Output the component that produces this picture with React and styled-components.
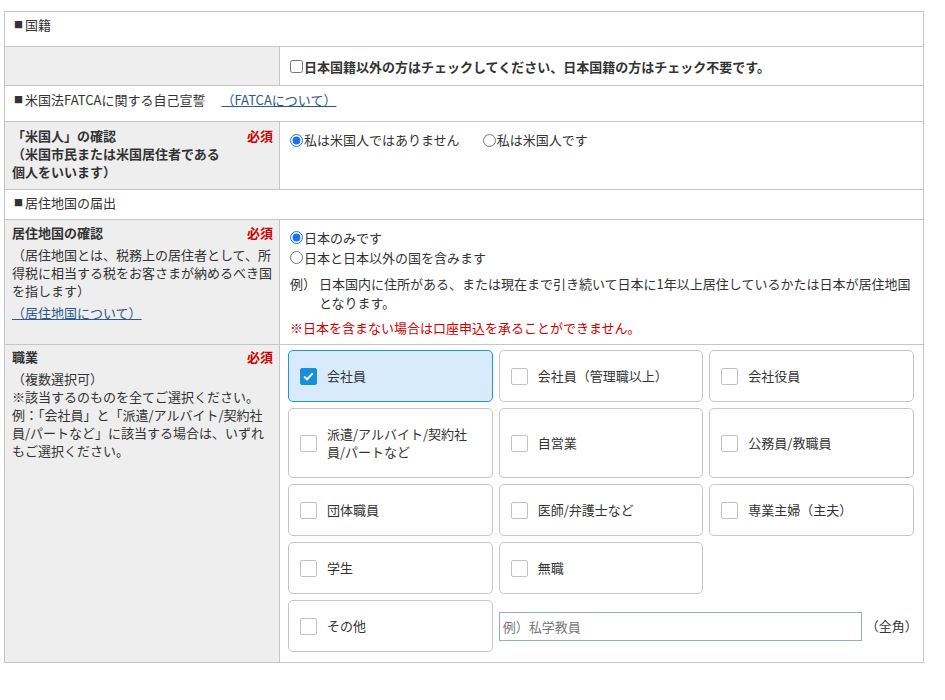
import styled, { createGlobalStyle } from "styled-components";

const GlobalStyle = createGlobalStyle`
  * { box-sizing: border-box; }
  body {
    margin: 0;
    background: #fff;
    color: #333;
    font-family: "Noto Sans CJK JP", "Noto Sans", sans-serif;
    font-size: 13px;
  }
`;

const Page = styled.div`
  padding: 11px 0 30px 4px;
`;

const Table = styled.div`
  width: 920px;
  border: 1px solid #c6c6c6;
  border-bottom: none;
`;

const SectionRow = styled.div`
  height: ${p => p.$h}px;
  padding: ${p => p.$pt}px 9px 0;
  border-bottom: 1px solid #c6c6c6;
  line-height: 18px;
  display: flex;
  align-items: flex-start;
`;

const Square = styled.span`
  font-size: 9px;
  margin-right: 2px;
  line-height: 18px;
`;

const Row = styled.div`
  display: grid;
  grid-template-columns: 275px 1fr;
  border-bottom: 1px solid #c6c6c6;
  min-height: ${p => p.$h || 0}px;
`;

const HeadCell = styled.div`
  background: #eee;
  border-right: 1px solid #c6c6c6;
  padding: ${p => p.$pt ?? 5}px 6px 8px 7px;
  line-height: 18px;
`;

const LabelLine = styled.div`
  display: flex;
  justify-content: space-between;
  align-items: flex-start;
  font-weight: bold;
`;

const Required = styled.span`
  color: #c00;
  font-weight: bold;
  flex-shrink: 0;
  margin-left: 8px;
`;

const Note = styled.div`
  margin-top: 4px;
`;

const Link = styled.a`
  color: #2b5a8a;
  text-decoration: underline;
  margin-left: ${p => p.$ml || 0}px;
`;

const BodyCell = styled.div`
  padding: ${p => p.$pad};
  line-height: ${p => p.$lh || 19}px;
  display: ${p => (p.$center ? "flex" : "block")};
  align-items: center;
`;

const CheckLabel = styled.label`
  display: inline-flex;
  align-items: center;
  font-weight: ${p => (p.$bold ? "bold" : "normal")};
  margin-right: ${p => p.$mr || 0}px;
`;

const NativeBox = styled.input`
  width: 13px;
  height: 13px;
  margin: 0 1px 0 0;
  accent-color: #1a73e8;
`;

const Example = styled.div`
  display: flex;
  margin-top: 6px;
`;

const ExampleMark = styled.span`
  width: 29px;
  flex-shrink: 0;
`;

const Warning = styled.div`
  color: #d40000;
  margin-top: 6px;
`;

const CardGrid = styled.div`
  display: grid;
  grid-template-columns: repeat(3, 1fr);
  gap: 6px;
`;

const Card = styled.label`
  grid-column: ${p => (p.$newRow ? "1" : "auto")};
  display: flex;
  align-items: center;
  min-height: 52px;
  padding: 16px 11px;
  border: 1px solid ${p => (p.$checked ? "#2196d8" : "#c6c6c6")};
  background: ${p => (p.$checked ? "#d8ebfc" : "#fff")};
  border-radius: 5px;
  line-height: 18px;
  cursor: pointer;
`;

const Box = styled.span`
  width: 17px;
  height: 17px;
  flex-shrink: 0;
  border: 1px solid ${p => (p.$checked ? "#1a8fd8" : "#c2c2c2")};
  background: ${p => (p.$checked ? "#1a8fd8" : "#fff")};
  border-radius: 2px;
  margin-right: 10px;
  display: flex;
  align-items: center;
  justify-content: center;
`;

const OtherField = styled.div`
  grid-column: span 2;
  display: flex;
  align-items: center;
`;

const TextInput = styled.input`
  flex-shrink: 0;
  width: 363px;
  height: 29px;
  border: 1px solid #8fb2c9;
  padding: 0 3px;
  font-family: inherit;
  font-size: 13px;
  color: #333;
  &::placeholder { color: #777; }
`;

const Unit = styled.span`
  margin-left: 4px;
  white-space: nowrap;
`;

const jobs = [
  ["会社員", true],
  ["会社員（管理職以上）"],
  ["会社役員"],
  [<>派遣/アルバイト/契約社<br />員/パートなど</>],
  ["自営業"],
  ["公務員/教職員"],
  ["団体職員"],
  ["医師/弁護士など"],
  ["専業主婦（主夫）"],
  ["学生"],
  ["無職"],
];

const JobCard = ({ label, checked, newRow }) => (
  <Card $checked={checked} $newRow={newRow}>
    <Box $checked={checked}>
      {checked && (
        <svg width="11" height="9" viewBox="0 0 11 9">
          <path d="M1.2 4.6 L4 7.3 L9.8 1.4" fill="none" stroke="#fff" strokeWidth="2" />
        </svg>
      )}
    </Box>
    <span>{label}</span>
  </Card>
);

export default function App() {
  return (
    <Page>
      <GlobalStyle />
      <Table>
        <SectionRow $h={35} $pt={4}><Square>■</Square>国籍</SectionRow>
        <Row $h={39}>
          <HeadCell />
          <BodyCell $pad="0 10px" $center>
            <CheckLabel $bold>
              <NativeBox type="checkbox" />
              日本国籍以外の方はチェックしてください、日本国籍の方はチェック不要です。
            </CheckLabel>
          </BodyCell>
        </Row>
        <SectionRow $h={36} $pt={5}>
          <Square>■</Square>米国法FATCAに関する自己宣誓
          <Link href="#" $ml={16}>（FATCAについて）</Link>
        </SectionRow>
        <Row $h={68}>
          <HeadCell $pt={5}>
            <LabelLine>
              <span>「米国人」の確認<br />（米国市民または米国居住者である<br />個人をいいます）</span>
              <Required>必須</Required>
            </LabelLine>
          </HeadCell>
          <BodyCell $pad="8px 10px" $lh={20}>
            <CheckLabel $mr={23}>
              <NativeBox type="radio" name="us" defaultChecked />
              私は米国人ではありません
            </CheckLabel>
            <CheckLabel>
              <NativeBox type="radio" name="us" />
              私は米国人です
            </CheckLabel>
          </BodyCell>
        </Row>
        <SectionRow $h={30} $pt={4}><Square>■</Square>居住地国の届出</SectionRow>
        <Row>
          <HeadCell $pt={4}>
            <LabelLine>
              <span>居住地国の確認</span>
              <Required>必須</Required>
            </LabelLine>
            <Note>（居住地国とは、税務上の居住者として、所<br />得税に相当する税をお客さまが納めるべき国<br />を指します）</Note>
            <Note><Link href="#">（居住地国について）</Link></Note>
          </HeadCell>
          <BodyCell $pad="8px 10px 7px">
            <div>
              <CheckLabel>
                <NativeBox type="radio" name="res" defaultChecked />
                日本のみです
              </CheckLabel>
            </div>
            <div>
              <CheckLabel>
                <NativeBox type="radio" name="res" />
                日本と日本以外の国を含みます
              </CheckLabel>
            </div>
            <Example>
              <ExampleMark>例）</ExampleMark>
              <span>日本国内に住所がある、または現在まで引き続いて日本に1年以上居住しているかたは日本が居住地国<br />となります。</span>
            </Example>
            <Warning>※日本を含まない場合は口座申込を承ることができません。</Warning>
          </BodyCell>
        </Row>
        <Row>
          <HeadCell $pt={3}>
            <LabelLine>
              <span>職業</span>
              <Required>必須</Required>
            </LabelLine>
            <Note>（複数選択可）<br />※該当するのものを全てご選択ください。<br />例：「会社員」と「派遣/アルバイト/契約社<br />員/パートなど」に該当する場合は、いずれ<br />もご選択ください。</Note>
          </HeadCell>
          <BodyCell $pad="5px 9px 10px 8px" $lh={18}>
            <CardGrid>
              {jobs.map(([label, checked], i) => (
                <JobCard key={i} label={label} checked={checked} />
              ))}
              <JobCard label="その他" newRow />
              <OtherField>
                <TextInput placeholder="例）私学教員" />
                <Unit>（全角）</Unit>
              </OtherField>
            </CardGrid>
          </BodyCell>
        </Row>
      </Table>
    </Page>
  );
}
